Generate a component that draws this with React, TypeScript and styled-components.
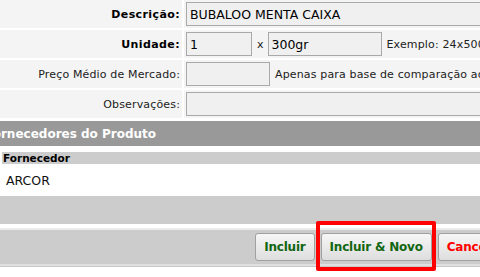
import styled, { createGlobalStyle } from 'styled-components';

const GlobalStyle = createGlobalStyle`
  html, body {
    margin: 0;
    padding: 0;
    background: #ffffff;
    overflow: hidden;
  }
  body {
    font-family: "DejaVu Sans", Verdana, sans-serif;
    font-size: 11px;
    color: #222;
  }
`;

const Viewport = styled.div`
  width: 480px;
  height: 277px;
  overflow: hidden;
`;

const Sheet = styled.div`
  width: 522px;
`;

const FormTable = styled.div`
  display: grid;
  grid-template-columns: 182px 1fr;
  grid-auto-rows: 28px;
  gap: 2px;
`;

const LabelCell = styled.div<{ $strong?: boolean }>`
  background: #f4f4f4;
  display: flex;
  align-items: center;
  justify-content: flex-end;
  padding-right: 2px;
  font-size: 11px;
  font-weight: ${(p) => (p.$strong ? 'bold' : 'normal')};
  color: ${(p) => (p.$strong ? '#000' : '#222')};
  letter-spacing: ${(p) => (p.$strong ? '0.4px' : '0.15px')};
`;

const ValueCell = styled.div`
  background: #f4f4f4;
  display: flex;
  align-items: center;
  padding-left: 2px;
  min-width: 0;
`;

const TextInput = styled.input<{ $width?: number }>`
  box-sizing: border-box;
  height: 24px;
  width: ${(p) => (p.$width ? `${p.$width}px` : '100%')};
  flex: none;
  border: 1px solid #a9a9a9;
  background: #f0f0f0;
  padding: 0 3px;
  margin: 0;
  font-family: "DejaVu Sans", Verdana, sans-serif;
  font-size: 12.5px;
  color: #000;
  outline: none;
`;

const Times = styled.span`
  margin: 0 4px 0 5px;
  font-size: 11px;
  color: #222;
`;

const Hint = styled.span`
  margin-left: 5px;
  font-size: 11px;
  color: #222;
  white-space: nowrap;
  letter-spacing: 0.15px;
`;

const SectionHeader = styled.div`
  margin-top: 3px;
  height: 25px;
  background: #999999;
  color: #ffffff;
  font-weight: bold;
  font-size: 12px;
  display: flex;
  align-items: center;
  text-indent: -15px;
  white-space: nowrap;
`;

const ListHead = styled.div`
  margin: 6px 0 0 2px;
  height: 12px;
  background: #cccccc;
  color: #000;
  font-weight: bold;
  font-size: 10.5px;
  line-height: 12px;
  padding-left: 1px;
`;

const ListRow = styled.div`
  height: 32px;
  display: flex;
  align-items: center;
  padding-left: 6px;
  font-size: 12.5px;
  color: #111;
`;

const GreyBand = styled.div`
  height: 28px;
  background: #cccccc;
`;

const Toolbar = styled.div`
  margin-top: 4px;
  height: 34px;
  border-top: 2px solid #ececec;
  border-bottom: 2px solid #e0e0e0;
  box-shadow: 0 1px 0 #c8c8c8;
  background: #cccccc;
  display: flex;
  align-items: center;
  justify-content: flex-end;
  gap: 6px;
  padding-right: 9px;
`;

const Button = styled.button<{ $danger?: boolean }>`
  box-sizing: border-box;
  height: 28px;
  padding: 0 8px;
  border: 1px solid #a0a0a0;
  border-radius: 3px;
  background: linear-gradient(#f6f6f6, #dedede);
  font-family: "DejaVu Sans", Verdana, sans-serif;
  font-weight: bold;
  font-size: 12px;
  letter-spacing: -0.2px;
  color: ${(p) => (p.$danger ? '#ff0000' : '#116611')};
  cursor: pointer;
`;

const Highlight = styled.div`
  position: relative;
  display: flex;
  height: 28px;

  &::after {
    content: '';
    position: absolute;
    top: -12px;
    height: 42px;
    left: -5px;
    right: -4px;
    border: 4px solid #ff0000;
    border-radius: 2px;
    pointer-events: none;
  }
`;

export default function App() {
  return (
    <>
      <GlobalStyle />
      <Viewport>
        <Sheet>
          <FormTable>
            <LabelCell $strong>Descrição:</LabelCell>
            <ValueCell>
              <TextInput defaultValue="BUBALOO MENTA CAIXA" />
            </ValueCell>

            <LabelCell $strong>Unidade:</LabelCell>
            <ValueCell>
              <TextInput $width={66} defaultValue="1" />
              <Times>x</Times>
              <TextInput $width={114} defaultValue="300gr" />
              <Hint>Exemplo: 24x500gr</Hint>
            </ValueCell>

            <LabelCell>Preço Médio de Mercado:</LabelCell>
            <ValueCell>
              <TextInput $width={84} />
              <Hint>Apenas para base de comparação aos preços</Hint>
            </ValueCell>

            <LabelCell>Observações:</LabelCell>
            <ValueCell>
              <TextInput />
            </ValueCell>
          </FormTable>

          <SectionHeader>Fornecedores do Produto</SectionHeader>
          <ListHead>Fornecedor</ListHead>
          <ListRow>ARCOR</ListRow>
          <GreyBand />

          <Toolbar>
            <Button>Incluir</Button>
            <Highlight>
              <Button>Incluir &amp; Novo</Button>
            </Highlight>
            <Button $danger>Cancelar</Button>
          </Toolbar>
        </Sheet>
      </Viewport>
    </>
  );
}
